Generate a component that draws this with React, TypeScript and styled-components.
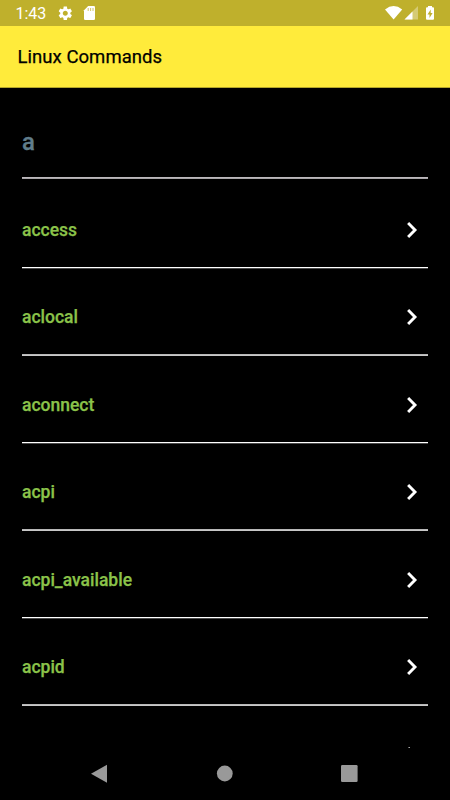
import React from "react";
import styled, { createGlobalStyle } from "styled-components";

const GlobalStyle = createGlobalStyle`
  * { box-sizing: border-box; }
  html, body { margin: 0; background: #000; overflow: hidden; }
`;

const Screen = styled.div`
  width: 450px;
  height: 800px;
  display: flex;
  flex-direction: column;
  background: #000;
  font-family: Roboto, sans-serif;
  overflow: hidden;
`;

const StatusBar = styled.header`
  height: 26px;
  flex: none;
  display: flex;
  justify-content: space-between;
  background: #bfb02c;
  color: #fff;
`;

const Clock = styled.time`
  width: 41px;
  padding-left: 15.4px;
  font-size: 16px;
  line-height: 28px;
  white-space: nowrap;
`;

const StatusGroup = styled.div`
  display: flex;
`;

const Icon = styled.svg`
  display: block;
  flex: none;
`;

const AppBar = styled.div`
  height: 62px;
  flex: none;
  padding-left: 17.4px;
  background: #ffeb3b;
  border-bottom: 1px solid #b5a72a;
`;

const Title = styled.h1`
  margin: 0;
  font-size: 18.5px;
  font-weight: 400;
  line-height: 62px;
  letter-spacing: 0.06px;
  -webkit-text-stroke: 0.25px #000;
  color: #000;
`;

const List = styled.main`
  height: 660px;
  flex: none;
  padding: 0 22px;
  overflow: hidden;
`;

const Divider = styled.div<{ $top: string; $bottom: string }>`
  height: 2px;
  background: linear-gradient(${(p) => p.$top} 50%, ${(p) => p.$bottom} 50%);
`;

const SectionLetter = styled.h2`
  margin: 0;
  height: 89px;
  padding-top: 38px;
  font-size: 24px;
  font-weight: 500;
  line-height: 32px;
  -webkit-text-stroke: 0.3px #607d8b;
  color: #607d8b;
`;

const Row = styled.div<{ $height: number; $offset: number }>`
  height: ${(p) => p.$height}px;
  padding-top: ${(p) => p.$offset}px;
  display: flex;
  justify-content: space-between;
  align-items: flex-start;
`;

const Command = styled.span`
  font-size: 17.5px;
  font-weight: 500;
  line-height: 32px;
  -webkit-text-stroke: 0.25px #8bc34a;
  color: #8bc34a;
`;

const NavBar = styled.nav`
  height: 52px;
  flex: none;
  background: #000;
`;

const commands = [
  { name: "access", height: 88, offset: 35 },
  { name: "aclocal", height: 85, offset: 32.4 },
  { name: "aconnect", height: 86, offset: 33 },
  { name: "acpi", height: 85, offset: 32.4 },
  { name: "acpi_available", height: 86, offset: 33 },
  { name: "acpid", height: 85, offset: 32.4 },
  { name: "", height: 86, offset: 33 },
];

const Chevron = () => (
  <Icon width="32" height="32" viewBox="0 0 32 32">
    <path d="M12.1 9 L19 16 L12.1 23" fill="none" stroke="#fff" strokeWidth="2.9" />
  </Icon>
);

export default function App() {
  return (
    <>
      <GlobalStyle />
      <Screen>
        <StatusBar>
          <StatusGroup>
            <Clock>1:43</Clock>
            <Icon width="60" height="26" viewBox="41 0 60 26" fill="#fff">
              <g transform="translate(56.9 4.9) scale(.7)">
                <path d="M19.14 12.94c.04-.3.06-.61.06-.94 0-.32-.02-.64-.07-.94l2.03-1.58c.18-.14.23-.41.12-.61l-1.92-3.32c-.12-.22-.37-.29-.59-.22l-2.39.96c-.5-.38-1.03-.7-1.62-.94l-.36-2.54c-.04-.24-.24-.41-.48-.41h-3.84c-.24 0-.43.17-.47.41l-.36 2.54c-.59.24-1.13.57-1.62.94l-2.39-.96c-.22-.08-.47 0-.59.22L2.74 8.87c-.12.21-.08.47.12.61l2.03 1.58c-.05.3-.09.63-.09.94s.02.64.07.94l-2.03 1.58c-.18.14-.23.41-.12.61l1.92 3.32c.12.22.37.29.59.22l2.39-.96c.5.38 1.03.7 1.62.94l.36 2.54c.05.24.24.41.48.41h3.84c.24 0 .44-.17.47-.41l.36-2.54c.59-.24 1.13-.56 1.62-.94l2.39.96c.22.08.47 0 .59-.22l1.92-3.32c.12-.22.07-.47-.12-.61l-2.01-1.58zM12 15.6c-1.98 0-3.6-1.62-3.6-3.6s1.62-3.6 3.6-3.6 3.6 1.62 3.6 3.6-1.62 3.6-3.6 3.6z" />
              </g>
              <path d="M88.2 6h5.5q1.3 0 1.3 1.3v11.4q0 1.3-1.3 1.3h-8.4q-1.3 0-1.3-1.3v-8.4z" />
              <path d="M88.2 8v3M90.6 8v3M93 8v3" stroke="#bfb02c" strokeWidth="1" opacity=".7" />
            </Icon>
          </StatusGroup>
          <Icon width="70" height="26" viewBox="380 0 70 26" fill="#fff">
            <path d="M385 9.4q8.7-6.8 17.2 0L393.6 19.6z" />
            <path d="M404.5 19.5L418 6v13.5z" opacity=".35" />
            <path d="M404.5 19.5L412.5 11.5v8z" />
            <path fillRule="evenodd" d="M428 6h4v1.3h1q1 0 1 1v10.4q0 1.1-1 1.1h-6q-1 0-1-1.1V8.3q0-1 1-1h1zM430.7 9.5l-3.2 5h2v3.6l3.1-5h-1.9z" />
          </Icon>
        </StatusBar>
        <AppBar>
          <Title>Linux Commands</Title>
        </AppBar>
        <List>
          <SectionLetter>a</SectionLetter>
          <Divider $top="#bdb9bd" $bottom="#a8a5a8" />
          {commands.map((c, i) => (
            <React.Fragment key={i}>
              <Row $height={c.height} $offset={c.offset}>
                <Command>{c.name}</Command>
                <Chevron />
              </Row>
              {i % 2 === 0 ? (
                <Divider $top="#fff" $bottom="#4a4a4a" />
              ) : (
                <Divider $top="#b8b8b8" $bottom="#c8c8c8" />
              )}
            </React.Fragment>
          ))}
        </List>
        <NavBar>
          <Icon width="450" height="52" viewBox="0 748 450 52" fill="#999">
            <path d="M91 773.7L107 764.7v18z" />
            <circle cx="224.8" cy="773.5" r="7.9" />
            <rect x="341" y="765" width="16.6" height="17" rx="1.2" />
          </Icon>
        </NavBar>
      </Screen>
    </>
  );
}
